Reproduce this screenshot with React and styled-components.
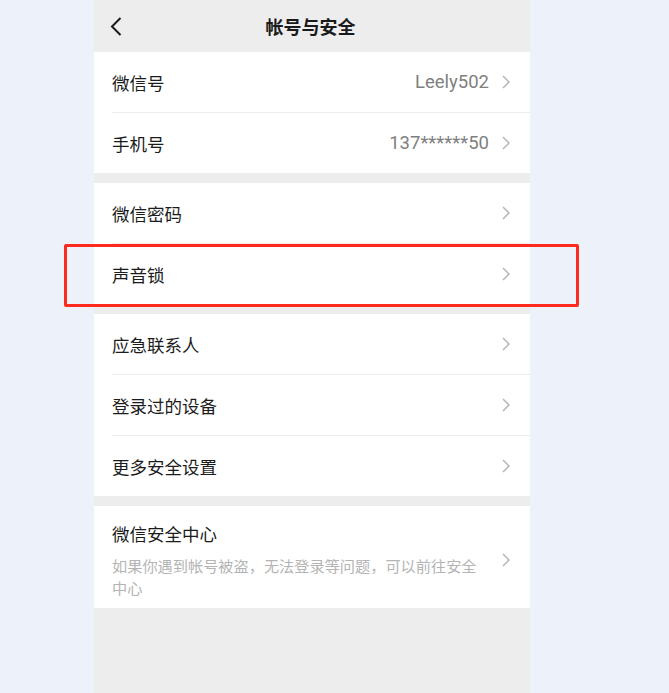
import React from 'react'
import styled, { createGlobalStyle } from 'styled-components'

const GlobalStyle = createGlobalStyle`
	html, body {
		margin: 0;
		padding: 0;
		background: #edf2fa;
	}

	body {
		font-family: 'Noto Sans', 'Noto Sans CJK SC', sans-serif;
		-webkit-font-smoothing: antialiased;
	}
`

const Page = styled.div`
	display: flex;
	padding-left: 94px;
	min-height: 693px;
`

const Screen = styled.div`
	width: 436px;
	min-height: 693px;
	background: #ededed;
	display: flex;
	flex-direction: column;
	gap: 10px;
`

const NavBar = styled.header`
	height: 52px;
	display: grid;
	grid-template-columns: 60px 1fr 60px;
	align-items: center;
	padding: 0 0 0 16px;
	margin-bottom: -10px;

	.back {
		display: flex;
		align-items: center;
	}

	.title {
		text-align: center;
		font-family: 'Noto Sans CJK SC', sans-serif;
		font-size: 18px;
		font-weight: 700;
		color: #1a1a1a;
		margin-left: -19px;
	}
`

const Card = styled.section`
	background: #ffffff;
	display: flex;
	flex-direction: column;
`

const Row = styled.div`
	position: relative;
	height: 60px;
	display: flex;
	align-items: center;
	padding: 0 20px 0 18px;

	& + & {
		border-top: 1px solid transparent;
	}

	& + &::before {
		content: '';
		position: absolute;
		top: -1px;
		left: 18px;
		right: 0;
		height: 1px;
		background: #ececec;
	}
`

const Label = styled.span`
	flex: 1;
	font-family: 'Noto Sans CJK SC', sans-serif;
	font-size: 17.5px;
	color: #1c1c1c;
`

const Value = styled.span`
	font-family: Roboto, 'Noto Sans', sans-serif;
	font-size: 18.5px;
	color: #7f7f7f;
	margin-right: 13px;
`

const Highlight = styled.div`
	position: absolute;
	left: -30px;
	right: -49px;
	top: 0;
	bottom: -3px;
	border: 3px solid #ff2a1e;
	border-radius: 2px;
	pointer-events: none;
`

const InfoRow = styled.div`
	display: flex;
	align-items: center;
	padding: 16px 20px 10px 18px;

	.text {
		flex: 1;
		display: flex;
		flex-direction: column;
		gap: 8px;
	}

	.heading {
		font-family: 'Noto Sans CJK SC', sans-serif;
		font-size: 17.5px;
		line-height: 24px;
		color: #1c1c1c;
	}

	.desc {
		max-width: 372px;
		font-family: 'Noto Sans CJK SC', sans-serif;
		font-size: 15.2px;
		line-height: 22px;
		color: #b4b4b4;
	}
`

const Chevron = () => (
	<svg width='8' height='14' viewBox='0 0 8 14' fill='none'>
		<path d='M1 1 L7 7 L1 13' stroke='#b5b5b5' strokeWidth='1.5' />
	</svg>
)

const BackArrow = () => (
	<svg width='12' height='19' viewBox='0 0 12 19' fill='none'>
		<path d='M10.5 1 L2 9.5 L10.5 18' stroke='#1a1a1a' strokeWidth='2' />
	</svg>
)

const groups = [
	[
		{ label: '微信号', value: 'Leely502' },
		{ label: '手机号', value: '137******50' },
	],
	[{ label: '微信密码' }, { label: '声音锁', marked: true }],
	[{ label: '应急联系人' }, { label: '登录过的设备' }, { label: '更多安全设置' }],
]

export default function App() {
	return (
		<>
			<GlobalStyle />
			<Page>
				<Screen>
					<NavBar>
						<span className='back'>
							<BackArrow />
						</span>
						<span className='title'>帐号与安全</span>
					</NavBar>
					{groups.map((items, i) => (
						<Card key={i}>
							{items.map((item) => (
								<Row key={item.label}>
									<Label>{item.label}</Label>
									{item.value && <Value>{item.value}</Value>}
									<Chevron />
									{item.marked && <Highlight />}
								</Row>
							))}
						</Card>
					))}
					<Card>
						<InfoRow>
							<div className='text'>
								<span className='heading'>微信安全中心</span>
								<span className='desc'>
									如果你遇到帐号被盗，无法登录等问题，可以前往安全中心
								</span>
							</div>
							<Chevron />
						</InfoRow>
					</Card>
				</Screen>
			</Page>
		</>
	)
}
